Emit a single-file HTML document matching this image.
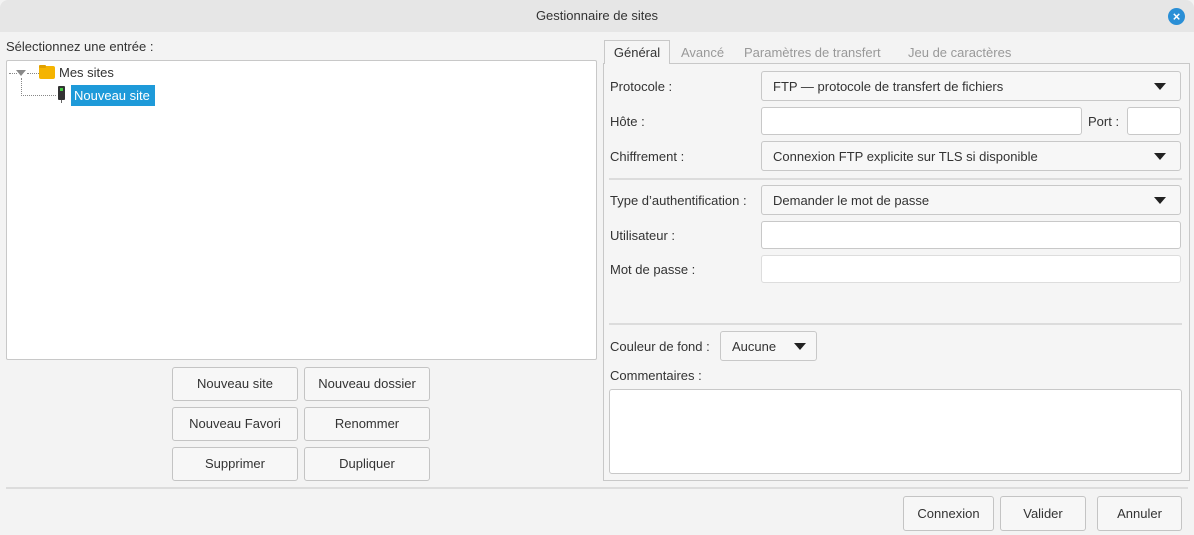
<!DOCTYPE html>
<html><head><meta charset="utf-8"><style>
*{box-sizing:border-box;margin:0;padding:0}
body{width:1194px;height:535px;background:#f3f3f3;font-family:"Liberation Sans",sans-serif;font-size:13px;color:#333;position:relative;overflow:hidden}
.a{position:absolute}
.title{left:0;top:0;width:1194px;height:32px;background:#e6e6e6;border-radius:8px 8px 0 0;text-align:center;line-height:32px;color:#333}
.close{left:1168px;top:8px;width:17px;height:17px;border-radius:50%;background:#2a8fd6;color:#fff;font-size:13px;font-weight:bold;line-height:17px;text-align:center}
.box{background:#fff;border:1px solid #c8c8c8;border-radius:3px}
.btn{background:#f7f7f7;border:1px solid #c4c4c4;border-radius:3px;text-align:center;color:#333}
.lbl{color:#333}
.tri{position:absolute;right:14px;top:11px;width:0;height:0;border-left:6px solid transparent;border-right:6px solid transparent;border-top:7px solid #222}
.sel{background:#f7f7f7;border:1px solid #c8c8c8;border-radius:3px;padding-left:11px}
.sep{height:2px;background:#dcdcdc}
</style></head><body>
<div class="a title">Gestionnaire de sites</div>
<div class="a close">×</div>
<div class="a lbl" style="left:6px;top:39px">Sélectionnez une entrée :</div>
<div class="a box" style="left:6px;top:60px;width:591px;height:300px;border-radius:2px"></div>
<div class="a" style="left:9px;top:73px;width:8px;border-top:1px dotted #888"></div>
<div class="a" style="left:16px;top:70px;width:0;height:0;border-left:5px solid transparent;border-right:5px solid transparent;border-top:6px solid #888"></div>
<div class="a" style="left:27px;top:73px;width:12px;border-top:1px dotted #888"></div>
<div class="a" style="left:21px;top:78px;height:18px;border-left:1px dotted #888"></div>
<div class="a" style="left:21px;top:95px;width:35px;border-top:1px dotted #888"></div>
<div class="a" style="left:39px;top:66px;width:16px;height:13px;background:#f5b400;border-radius:2px"></div>
<div class="a" style="left:39px;top:65px;width:7px;height:3px;background:#e0a000;border-radius:1px"></div>
<div class="a" style="left:59px;top:65px">Mes sites</div>
<div class="a" style="left:58px;top:86px;width:7px;height:14px;background:#333;border-radius:1px"></div>
<div class="a" style="left:60px;top:88px;width:3px;height:3px;background:#4c4"></div>
<div class="a" style="left:61px;top:100px;width:1px;height:3px;background:#666"></div>
<div class="a" style="left:71px;top:85px;width:84px;height:21px;background:#1e9ad9;color:#fff;line-height:21px;padding-left:3px">Nouveau site</div>
<div class="a btn" style="left:172px;top:367px;width:126px;height:34px;line-height:32px">Nouveau site</div>
<div class="a btn" style="left:304px;top:367px;width:126px;height:34px;line-height:32px">Nouveau dossier</div>
<div class="a btn" style="left:172px;top:407px;width:126px;height:34px;line-height:32px">Nouveau Favori</div>
<div class="a btn" style="left:304px;top:407px;width:126px;height:34px;line-height:32px">Renommer</div>
<div class="a btn" style="left:172px;top:447px;width:126px;height:34px;line-height:32px">Supprimer</div>
<div class="a btn" style="left:304px;top:447px;width:126px;height:34px;line-height:32px">Dupliquer</div>
<div class="a" style="left:603px;top:63px;width:587px;height:418px;border:1px solid #c8c8c8;background:#f5f5f5"></div>
<div class="a" style="left:604px;top:40px;width:66px;height:24px;border:1px solid #c8c8c8;border-bottom:none;background:#f5f5f5;text-align:center;line-height:24px;color:#333">Général</div>
<div class="a" style="left:681px;top:45px;color:#999">Avancé</div>
<div class="a" style="left:744px;top:45px;color:#999">Paramètres de transfert</div>
<div class="a" style="left:908px;top:45px;color:#999">Jeu de caractères</div>
<div class="a lbl" style="left:610px;top:79px">Protocole :</div>
<div class="a sel" style="left:761px;top:71px;width:420px;height:30px;line-height:29px">FTP — protocole de transfert de fichiers<div class="tri"></div></div>
<div class="a lbl" style="left:610px;top:114px">Hôte :</div>
<div class="a box" style="left:761px;top:107px;width:321px;height:28px"></div>
<div class="a lbl" style="left:1088px;top:114px">Port :</div>
<div class="a box" style="left:1127px;top:107px;width:54px;height:28px"></div>
<div class="a lbl" style="left:610px;top:149px">Chiffrement :</div>
<div class="a sel" style="left:761px;top:141px;width:420px;height:30px;line-height:29px">Connexion FTP explicite sur TLS si disponible<div class="tri"></div></div>
<div class="a sep" style="left:609px;top:178px;width:573px"></div>
<div class="a lbl" style="left:610px;top:193px">Type d’authentification :</div>
<div class="a sel" style="left:761px;top:185px;width:420px;height:30px;line-height:29px">Demander le mot de passe<div class="tri"></div></div>
<div class="a lbl" style="left:610px;top:228px">Utilisateur :</div>
<div class="a box" style="left:761px;top:221px;width:420px;height:28px"></div>
<div class="a lbl" style="left:610px;top:262px">Mot de passe :</div>
<div class="a box" style="left:761px;top:255px;width:420px;height:28px;border-color:#ddd"></div>
<div class="a sep" style="left:609px;top:323px;width:573px"></div>
<div class="a lbl" style="left:610px;top:339px">Couleur de fond :</div>
<div class="a sel" style="left:720px;top:331px;width:97px;height:30px;line-height:29px">Aucune<div class="tri" style="right:10px"></div></div>
<div class="a lbl" style="left:610px;top:368px">Commentaires :</div>
<div class="a box" style="left:609px;top:389px;width:573px;height:85px"></div>
<div class="a sep" style="left:6px;top:487px;width:1182px"></div>
<div class="a btn" style="left:903px;top:496px;width:91px;height:35px;line-height:33px">Connexion</div>
<div class="a btn" style="left:1000px;top:496px;width:86px;height:35px;line-height:33px">Valider</div>
<div class="a btn" style="left:1097px;top:496px;width:85px;height:35px;line-height:33px">Annuler</div>
</body></html>
